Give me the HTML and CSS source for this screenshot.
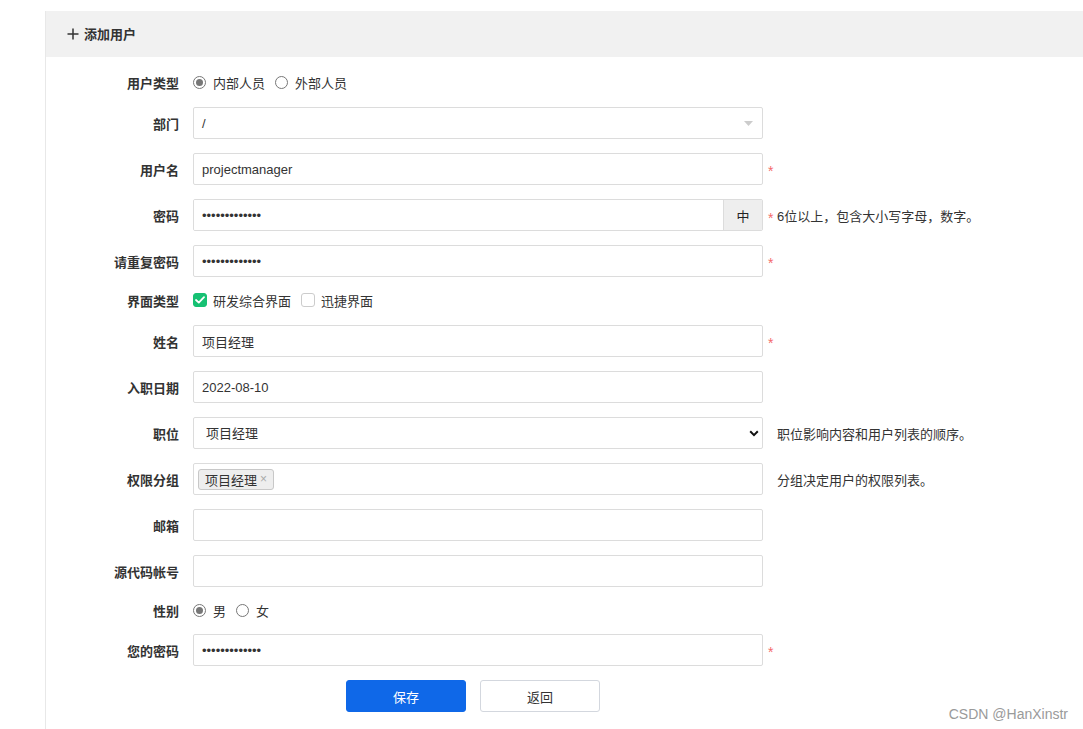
FILE: index.html
```html
<!DOCTYPE html>
<html lang="zh-CN">
<head>
<meta charset="utf-8">
<title>添加用户</title>
<link rel="stylesheet" href="styles.css">
</head>
<body>
<div class="page">
  <div class="panel">
    <div class="panel-head">
      <svg class="plus" width="12" height="12" viewBox="0 0 12 12"><path d="M6 0.5V11.5M0.5 6H11.5" stroke="#333" stroke-width="1.5" fill="none"/></svg>
      <span>添加用户</span>
    </div>
    <form class="form">
      <div class="row short">
        <label class="lbl">用户类型</label>
        <div class="ctl choices">
          <label class="opt"><span class="radio on"></span>内部人员</label>
          <label class="opt"><span class="radio"></span>外部人员</label>
        </div>
      </div>
      <div class="row">
        <label class="lbl">部门</label>
        <div class="ctl field picker"><span>/</span><svg width="9" height="5" viewBox="0 0 9 5"><path d="M0 0H9L4.5 5Z" fill="#ccc"/></svg></div>
      </div>
      <div class="row">
        <label class="lbl">用户名</label>
        <input class="ctl field" type="text" value="projectmanager">
        <div class="aside"><span class="req">*</span></div>
      </div>
      <div class="row">
        <label class="lbl">密码</label>
        <div class="ctl group">
          <input class="field inner" type="password" value="abcdefghijklm">
          <span class="addon">中</span>
        </div>
        <div class="aside"><span class="req">*</span> 6位以上，包含大小写字母，数字。</div>
      </div>
      <div class="row">
        <label class="lbl">请重复密码</label>
        <input class="ctl field" type="password" value="abcdefghijklm">
        <div class="aside"><span class="req">*</span></div>
      </div>
      <div class="row short">
        <label class="lbl">界面类型</label>
        <div class="ctl choices">
          <label class="opt"><span class="check on"><svg width="10" height="8" viewBox="0 0 10 8"><path d="M1 4L3.8 6.6L9 1.2" stroke="#fff" stroke-width="1.8" fill="none" stroke-linecap="round" stroke-linejoin="round"/></svg></span>研发综合界面</label>
          <label class="opt"><span class="check"></span>迅捷界面</label>
        </div>
      </div>
      <div class="row">
        <label class="lbl">姓名</label>
        <input class="ctl field" type="text" value="项目经理">
        <div class="aside"><span class="req">*</span></div>
      </div>
      <div class="row">
        <label class="lbl">入职日期</label>
        <input class="ctl field" type="text" value="2022-08-10">
      </div>
      <div class="row">
        <label class="lbl">职位</label>
        <div class="ctl selwrap">
          <select class="field sel"><option>项目经理</option></select>
          <svg class="chev" width="10" height="7" viewBox="0 0 10 7"><path d="M1.2 1.3L5 5.1L8.8 1.3" stroke="#111" stroke-width="2" fill="none"/></svg>
        </div>
        <div class="aside note">职位影响内容和用户列表的顺序。</div>
      </div>
      <div class="row">
        <label class="lbl">权限分组</label>
        <div class="ctl field tags"><span class="tag">项目经理 <span class="x">×</span></span></div>
        <div class="aside note">分组决定用户的权限列表。</div>
      </div>
      <div class="row">
        <label class="lbl">邮箱</label>
        <input class="ctl field" type="text" value="">
      </div>
      <div class="row">
        <label class="lbl">源代码帐号</label>
        <input class="ctl field" type="text" value="">
      </div>
      <div class="row short tight">
        <label class="lbl">性别</label>
        <div class="ctl choices">
          <label class="opt"><span class="radio on"></span>男</label>
          <label class="opt"><span class="radio"></span>女</label>
        </div>
      </div>
      <div class="row">
        <label class="lbl">您的密码</label>
        <input class="ctl field" type="password" value="abcdefghijklm">
        <div class="aside"><span class="req">*</span></div>
      </div>
      <div class="actions">
        <button type="button" class="btn primary">保存</button>
        <button type="button" class="btn">返回</button>
      </div>
    </form>
  </div>
  <div class="watermark">CSDN @HanXinstr</div>
</div>
</body>
</html>
```

FILE: styles.css
```css
* { box-sizing: border-box; }
html, body { margin: 0; padding: 0; background: #fff; }
body {
  font-family: "Liberation Sans", "Noto Sans CJK SC", sans-serif;
  font-size: 13px;
  color: #333;
  width: 1083px;
  height: 729px;
  overflow: hidden;
}
.page {
  position: relative;
  height: 729px;
  padding: 11px 0 0 45px;
}
.panel {
  border-left: 1px solid #e8e8e8;
  height: 718px;
}
.panel-head {
  height: 46px;
  background: #f1f1f1;
  display: flex;
  align-items: center;
  padding-left: 21px;
  padding-bottom: 1px;
  gap: 5px;
  font-weight: bold;
  color: #333;
}
.form {
  padding-top: 9px;
}
.row {
  display: grid;
  grid-template-columns: 133px 570px auto;
  column-gap: 14px;
  align-items: center;
  padding: 7px 0;
}
.row.short .ctl { height: 20px; }
.row.short { padding-top: 6px; padding-bottom: 8px; }
.row.short.tight { padding-bottom: 7px; }
.lbl {
  text-align: right;
  font-weight: bold;
  color: #333;
}
.field {
  height: 32px;
  border: 1px solid #dcdcdc;
  border-radius: 2px;
  background: #fff;
  font-family: inherit;
  font-size: 13px;
  color: #333;
  padding: 0 8px;
  outline: none;
  width: 100%;
}
input.field { display: block; }
.choices {
  display: flex;
  align-items: center;
  gap: 10px;
}
.opt {
  display: flex;
  align-items: center;
  gap: 7px;
  color: #333;
}
.radio {
  width: 13px;
  height: 13px;
  border: 1px solid #777;
  border-radius: 50%;
  display: inline-block;
  position: relative;
  background: #fff;
}
.radio.on::after {
  content: "";
  position: absolute;
  left: 2px; top: 2px;
  width: 7px; height: 7px;
  border-radius: 50%;
  background: #777;
}
.check {
  width: 14px;
  height: 14px;
  border: 1px solid #ccc;
  border-radius: 3px;
  display: inline-flex;
  align-items: center;
  justify-content: center;
  background: #fff;
  margin-right: -1px;
}
.check.on {
  background: #16c173;
  border-color: #16c173;
}
.picker {
  display: flex;
  align-items: center;
  justify-content: space-between;
  padding-right: 9px;
}
.group {
  display: flex;
  height: 32px;
  border: 1px solid #dcdcdc;
  border-radius: 2px;
  overflow: hidden;
}
.group .inner {
  border: none;
  height: 30px;
  flex: 1;
  border-radius: 0;
}
.addon {
  width: 39px;
  background: #eee;
  border-left: 1px solid #dcdcdc;
  display: flex;
  align-items: center;
  justify-content: center;
  color: #222;
}
.aside {
  margin-left: -9px;
  color: #333;
}
.aside.note { margin-left: 0; }
.req {
  color: #f46a6a;
  font-size: 14px;
  position: relative;
  top: 2px;
}
.selwrap { position: relative; }
.sel {
  appearance: none;
  -webkit-appearance: none;
  padding-left: 12px;
}
.chev {
  position: absolute;
  right: 4px;
  top: 13px;
  pointer-events: none;
}
.tags {
  display: flex;
  align-items: center;
  padding: 0 4px;
}
.tag {
  display: inline-flex;
  align-items: center;
  height: 21px;
  padding: 0 6px 0 6px;
  background: #eee;
  border: 1px solid #c8c8c8;
  border-radius: 3px;
  color: #333;
  gap: 3px;
}
.tag .x {
  color: #aaa;
  font-size: 12px;
}
.actions {
  display: flex;
  gap: 14px;
  padding: 7px 0 0 300px;
}
.btn {
  width: 120px;
  height: 32px;
  border-radius: 3px;
  border: 1px solid #d3d7de;
  background: #fff;
  font-family: inherit;
  font-size: 13px;
  color: #333;
}
.btn.primary {
  background: #0f68e8;
  border-color: #0f68e8;
  color: #fff;
}
.watermark {
  position: absolute;
  right: 15px;
  bottom: 7px;
  font-family: "Liberation Sans", sans-serif;
  font-size: 14px;
  color: #9a9a9a;
}
```
